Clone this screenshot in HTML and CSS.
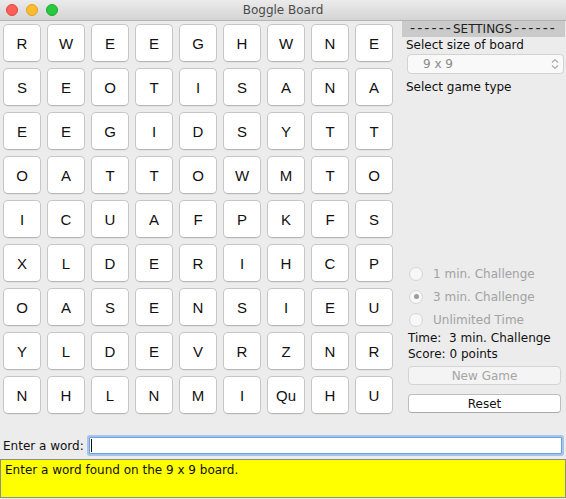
FILE: index.html
```html
<!DOCTYPE html>
<html>
<head>
<meta charset="utf-8">
<title>Boggle Board</title>
<link rel="stylesheet" href="styles.css">
</head>
<body>
<div class="window">
  <header class="titlebar">
    <div class="lights">
      <span class="light red"></span>
      <span class="light yellow"></span>
      <span class="light green"></span>
    </div>
    <div class="title">Boggle Board</div>
    <div></div>
  </header>
  <div class="main">
    <div class="board">
      <button class="cell">R</button><button class="cell">W</button><button class="cell">E</button><button class="cell">E</button><button class="cell">G</button><button class="cell">H</button><button class="cell">W</button><button class="cell">N</button><button class="cell">E</button>
      <button class="cell">S</button><button class="cell">E</button><button class="cell">O</button><button class="cell">T</button><button class="cell">I</button><button class="cell">S</button><button class="cell">A</button><button class="cell">N</button><button class="cell">A</button>
      <button class="cell">E</button><button class="cell">E</button><button class="cell">G</button><button class="cell">I</button><button class="cell">D</button><button class="cell">S</button><button class="cell">Y</button><button class="cell">T</button><button class="cell">T</button>
      <button class="cell">O</button><button class="cell">A</button><button class="cell">T</button><button class="cell">T</button><button class="cell">O</button><button class="cell">W</button><button class="cell">M</button><button class="cell">T</button><button class="cell">O</button>
      <button class="cell">I</button><button class="cell">C</button><button class="cell">U</button><button class="cell">A</button><button class="cell">F</button><button class="cell">P</button><button class="cell">K</button><button class="cell">F</button><button class="cell">S</button>
      <button class="cell">X</button><button class="cell">L</button><button class="cell">D</button><button class="cell">E</button><button class="cell">R</button><button class="cell">I</button><button class="cell">H</button><button class="cell">C</button><button class="cell">P</button>
      <button class="cell">O</button><button class="cell">A</button><button class="cell">S</button><button class="cell">E</button><button class="cell">N</button><button class="cell">S</button><button class="cell">I</button><button class="cell">E</button><button class="cell">U</button>
      <button class="cell">Y</button><button class="cell">L</button><button class="cell">D</button><button class="cell">E</button><button class="cell">V</button><button class="cell">R</button><button class="cell">Z</button><button class="cell">N</button><button class="cell">R</button>
      <button class="cell">N</button><button class="cell">H</button><button class="cell">L</button><button class="cell">N</button><button class="cell">M</button><button class="cell">I</button><button class="cell">Qu</button><button class="cell">H</button><button class="cell">U</button>
    </div>
    <aside class="settings">
      <div class="settings-head"><span class="dashes">------</span>SETTINGS<span class="dashes dashes-right">------</span></div>
      <div class="label">Select size of board</div>
      <div class="combo">
        <span class="combo-text">9 x 9</span>
        <svg class="combo-arrows" width="8" height="12" viewBox="0 0 8 12"><path d="M1 4.5 L4 1.5 L7 4.5 M1 7.5 L4 10.5 L7 7.5" fill="none" stroke="#a9a9a9" stroke-width="1.1"/></svg>
      </div>
      <div class="label">Select game type</div>
      <div class="radios">
        <div class="radio"><span class="radio-circle"></span><span>1 min. Challenge</span></div>
        <div class="radio"><span class="radio-circle checked"></span><span>3 min. Challenge</span></div>
        <div class="radio"><span class="radio-circle"></span><span>Unlimited Time</span></div>
      </div>
      <div class="info info-first">Time:&nbsp; 3 min. Challenge</div>
      <div class="info">Score: 0 points</div>
      <button class="btn btn-disabled">New Game</button>
      <button class="btn btn-reset">Reset</button>
    </aside>
  </div>
  <div class="entry">
    <span class="entry-label">Enter a word:</span>
    <div class="field">
      <input class="field-input" type="text">
      <span class="caret"></span>
    </div>
  </div>
  <div class="message">Enter a word found on the 9 x 9 board.</div>
</div>
</body>
</html>
```
FILE: styles.css
```css
* { box-sizing: border-box; }
html, body {
  margin: 0;
  padding: 0;
  background: #ececec;
}
body {
  width: 566px;
  height: 499px;
  overflow: hidden;
  font-family: "DejaVu Sans", "Liberation Sans", sans-serif;
  font-size: 12px;
  color: #111;
}
.window {
  display: flex;
  flex-direction: column;
  width: 566px;
  height: 499px;
}
.titlebar {
  height: 21px;
  display: grid;
  grid-template-columns: 1fr auto 1fr;
  align-items: center;
  background: linear-gradient(#ebebeb, #d4d4d4);
  border-bottom: 1px solid #b3b3b3;
  flex: none;
}
.lights {
  display: flex;
  gap: 8px;
  padding-left: 6px;
  padding-bottom: 1px;
}
.light {
  width: 12px;
  height: 12px;
  border-radius: 50%;
  display: block;
}
.red { background: #fc5f57; border: 1px solid #e0443e; }
.yellow { background: #fdbc2e; border: 1px solid #dea123; }
.green { background: #28c840; border: 1px solid #1aab29; }
.title {
  font-size: 12px;
  color: #4b4b4b;
  padding-bottom: 1px;
}
.main {
  display: flex;
  height: 393px;
  flex: none;
}
.board {
  display: grid;
  grid-template-columns: repeat(9, 38px);
  grid-auto-rows: 38px;
  gap: 6px;
  padding: 3px 0 0 3px;
}
.cell {
  margin: 0;
  padding: 0;
  background: #fff;
  border: 1px solid #c6c6c6;
  border-bottom-color: #b6b6b6;
  border-radius: 5px;
  box-shadow: 0 1px 0 rgba(0,0,0,0.04);
  font-family: "Liberation Sans", Arial, sans-serif;
  font-size: 15px;
  color: #111;
  display: flex;
  align-items: center;
  justify-content: center;
}
.settings {
  width: 163px;
  margin-left: 9px;
  display: flex;
  flex-direction: column;
}
.settings-head {
  height: 16px;
  background: #cacaca;
  text-align: center;
  line-height: 15px;
  font-size: 12px;
  color: #222;
  white-space: nowrap;
  overflow: hidden;
}
.dashes {
  font-size: 14px;
  letter-spacing: 2.1px;
}
.dashes-right {
  margin-left: 2px;
  letter-spacing: 2.1px;
}
.label {
  height: 16px;
  line-height: 16px;
  padding-left: 4px;
  color: #111;
}
.combo {
  margin: 1px 0 5px 5px;
  width: 157px;
  height: 20px;
  border: 1px solid #d2d2d2;
  border-radius: 4px;
  background: #f9f9f9;
  display: flex;
  align-items: center;
  justify-content: space-between;
  padding: 0 4px 0 15px;
}
.combo-text {
  color: #8a8a8a;
  font-size: 12px;
}
.combo-arrows { display: block; }
.radios {
  margin-top: 167px;
  display: flex;
  flex-direction: column;
}
.radio {
  height: 23px;
  display: flex;
  align-items: center;
  padding-left: 7px;
  gap: 10px;
  color: #a2a2a2;
}
.radio-circle {
  width: 14px;
  height: 14px;
  border-radius: 50%;
  border: 1px solid #d6d6d6;
  background: #f7f7f7;
  display: flex;
  align-items: center;
  justify-content: center;
}
.radio-circle.checked::after {
  content: "";
  width: 5px;
  height: 5px;
  border-radius: 50%;
  background: #9c9c9c;
}
.info {
  height: 16px;
  line-height: 16px;
  padding-left: 6px;
  color: #111;
}
.info-first { margin-top: -1px; }
.btn {
  margin: 4px 0 0 6px;
  width: 153px;
  height: 19px;
  padding: 0;
  border-radius: 4px;
  font-family: "DejaVu Sans", sans-serif;
  font-size: 12px;
  background: #fff;
  border: 1px solid #bdbdbd;
  color: #111;
}
.btn-disabled {
  background: #f4f4f4;
  border-color: #d4d4d4;
  color: #a5a5a5;
}
.btn-reset {
  margin-top: 9px;
  border-bottom-color: #a9a9a9;
}
.entry {
  margin-top: 21px;
  height: 21px;
  display: flex;
  align-items: center;
  flex: none;
}
.entry-label {
  padding-left: 3px;
  width: 87px;
  color: #111;
}
.field {
  position: relative;
  width: 477px;
  height: 21px;
  padding: 2px;
}
.field-input {
  display: block;
  width: 100%;
  height: 100%;
  margin: 0;
  border: 1px solid #6aa0e2;
  box-shadow: 0 0 0 2px rgba(122, 170, 232, 0.6);
  border-radius: 1px;
  background: #fff;
  outline: none;
  font-family: "DejaVu Sans", sans-serif;
  font-size: 12px;
  padding: 0 3px;
}
.caret {
  position: absolute;
  left: 4px;
  top: 4px;
  width: 1px;
  height: 13px;
  background: #111;
}
.message {
  margin-top: 3px;
  width: 566px;
  height: 39px;
  background: #ffff00;
  border: 1px solid #8d8d8d;
  padding: 2px 0 0 4px;
  line-height: 16px;
  color: #111;
  flex: none;
}
```
